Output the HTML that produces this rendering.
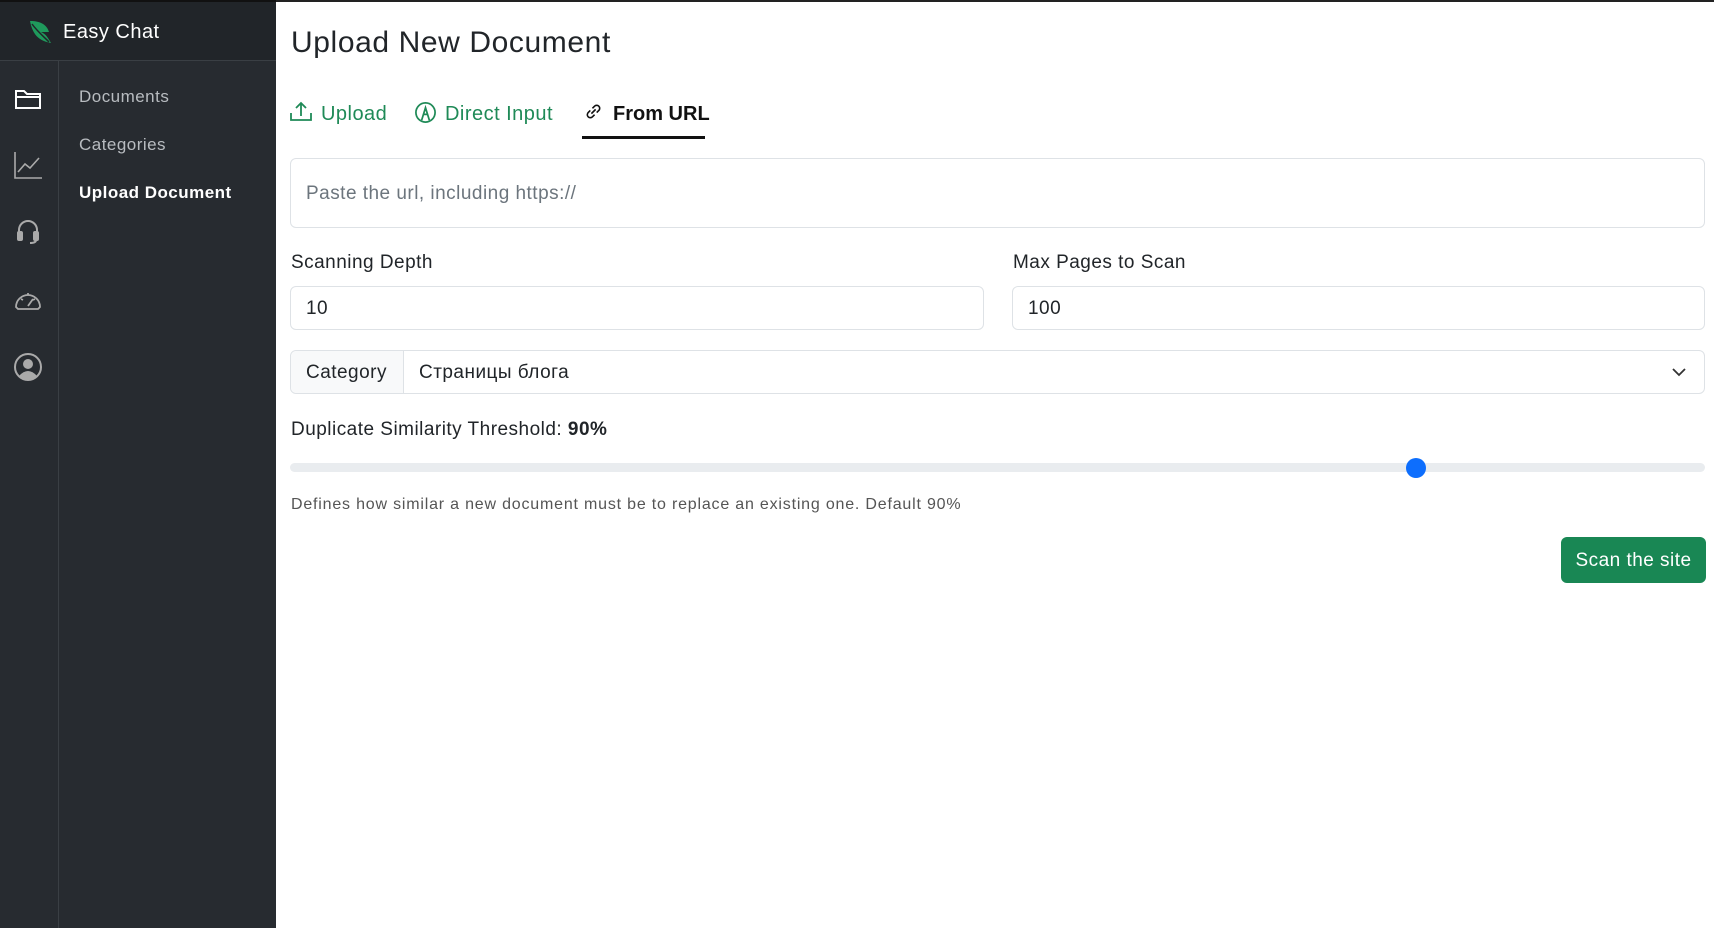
<!DOCTYPE html>
<html><head><meta charset="utf-8"><style>
*{box-sizing:border-box;margin:0;padding:0}
body{width:1714px;height:928px;overflow:hidden;font-family:"Liberation Sans","Noto Sans CJK SC",sans-serif;background:#fff;color:#212529;position:relative;letter-spacing:0.03em}
.abs{position:absolute}
#side{left:0;top:0;width:276px;height:928px;background:#272b30}
#head{left:0;top:0;width:276px;height:61px;background:#212529;border-bottom:1px solid #3a3f44;border-top:2px solid #111}
#iconcol{left:0;top:61px;width:59px;height:867px;border-right:1px solid #3a3f44}
.nav{left:79px;font-size:17px;color:#b8bcc0}
.ic{left:13px;width:30px;height:30px}
.lbl{font-size:19px;color:#212529}
.inp{border:1px solid #dee2e6;border-radius:6px;background:#fff;font-size:19px;padding-left:15px;display:flex;align-items:center;padding-top:2px}
</style></head><body>
<div class="abs" style="left:276px;top:0;width:1438px;height:2px;background:#222"></div>
<div id="side" class="abs"></div>
<div id="head" class="abs">
<svg class="abs" style="left:27px;top:17px" width="26" height="26" viewBox="0 0 26 26"><path d="M3 2 C14 2 20 6 22 13 L14 13 C19 15 21 19 24 24 C14 22 6 18 3 2Z" fill="#1f9a5c"/><path d="M5 5 C10 12 16 17 22 23" stroke="#212529" stroke-width="1.5" fill="none"/></svg>
<div class="abs" style="left:63px;top:19px;font-size:20px;color:#fff">Easy Chat</div>
</div>
<div id="iconcol" class="abs"></div>
<svg class="abs ic" style="top:84px" viewBox="0 0 30 30" fill="none" stroke="#fff" stroke-width="2"><path d="M3 7 h8 l3 3 h13 v14 h-24z M3 13 h24"/></svg>
<svg class="abs ic" style="top:150px" viewBox="0 0 30 30" fill="none" stroke="#aaa" stroke-width="1.6"><path d="M2 2 v26 h27 M5 22 l7 -8 l5 4 l9 -10"/></svg>
<svg class="abs ic" style="top:217px" viewBox="0 0 30 30" fill="none" stroke="#aaa" stroke-width="2"><path d="M6 18 v-5 a9 9 0 0 1 18 0 v5"/><rect x="5" y="15" width="4" height="8" rx="1" fill="#aaa"/><rect x="21" y="15" width="4" height="8" rx="1" fill="#aaa"/><path d="M23 23 q0 3 -6 3"/></svg>
<svg class="abs ic" style="top:285px" viewBox="0 0 30 30" fill="none" stroke="#aaa" stroke-width="1.8"><path d="M3 22 a12 12 0 1 1 24 0 l-2 2 h-20z M15 21 l5 -7 M8 14 l2 1 M22 14 l-2 1 M15 8 v2"/></svg>
<svg class="abs ic" style="top:352px" viewBox="0 0 30 30"><circle cx="15" cy="15" r="13" fill="none" stroke="#aaa" stroke-width="2"/><circle cx="15" cy="12" r="5" fill="#aaa"/><path d="M6 24 q9 -10 18 0 q-9 7 -18 0z" fill="#aaa"/></svg>
<div class="abs nav" style="top:87px">Documents</div>
<div class="abs nav" style="top:135px">Categories</div>
<div class="abs nav" style="top:183px;color:#fff;font-weight:bold">Upload Document</div>

<div class="abs" style="left:291px;top:26px;font-size:30px;color:#212529;letter-spacing:0.02em">Upload New Document</div>
<svg class="abs" style="left:289px;top:101px" width="24" height="22" viewBox="0 0 24 22" fill="none" stroke="#1f8a57" stroke-width="1.8"><path d="M2 12 v7 h20 v-7 M12 15 v-13 M7 7 l5 -5 l5 5"/></svg>
<div class="abs" style="left:321px;top:103px;font-size:20px;color:#1f8a57">Upload</div>
<svg class="abs" style="left:414px;top:101px" width="23" height="23" viewBox="0 0 24 24" fill="none" stroke="#1f8a57" stroke-width="1.8"><circle cx="12" cy="12" r="10"/><path d="M8 20 l4 -13 l4 13 M10 14 h4"/></svg>
<div class="abs" style="left:445px;top:103px;font-size:20px;color:#1f8a57">Direct Input</div>
<svg class="abs" style="left:585px;top:103px" width="17" height="17" viewBox="0 0 16 16" fill="none" stroke="#111" stroke-width="1.5"><path d="M7 5 l2 -2 a2.5 2.5 0 0 1 4 4 l-2 2 M9 11 l-2 2 a2.5 2.5 0 0 1 -4 -4 l2 -2 M6 10 l4 -4"/></svg>
<div class="abs" style="left:613px;top:103px;font-size:20px;color:#111;font-weight:bold;letter-spacing:0">From URL</div>
<div class="abs" style="left:582px;top:136px;width:123px;height:3px;background:#111"></div>

<div class="abs inp" style="left:290px;top:158px;width:1415px;height:70px;color:#6c757d">Paste the url, including https://</div>
<div class="abs lbl" style="left:291px;top:252px">Scanning Depth</div>
<div class="abs lbl" style="left:1013px;top:252px">Max Pages to Scan</div>
<div class="abs inp" style="left:290px;top:286px;width:694px;height:44px">10</div>
<div class="abs inp" style="left:1012px;top:286px;width:693px;height:44px">100</div>
<div class="abs inp" style="left:290px;top:350px;width:1415px;height:44px;padding-left:0;padding-top:0">
<div style="width:113px;height:42px;background:#f8f9fa;border-right:1px solid #dee2e6;border-radius:6px 0 0 6px;display:flex;align-items:center;padding-left:15px;padding-top:2px">Category</div>
<div style="padding-left:15px;padding-top:2px">Страницы блога</div>
<svg class="abs" style="right:18px;top:16px" width="14" height="10" viewBox="0 0 14 10" fill="none" stroke="#333" stroke-width="1.8"><path d="M1 2 l6 6 l6 -6"/></svg>
</div>
<div class="abs lbl" style="left:291px;top:419px">Duplicate Similarity Threshold: <b>90%</b></div>
<div class="abs" style="left:290px;top:463px;width:1415px;height:9px;background:#e9ecef;border-radius:5px"></div>
<div class="abs" style="left:1406px;top:458px;width:20px;height:20px;background:#0d6efd;border-radius:50%"></div>
<div class="abs" style="left:291px;top:496px;font-size:16px;color:#555;letter-spacing:0.05em">Defines how similar a new document must be to replace an existing one. Default 90%</div>
<div class="abs" style="left:1561px;top:537px;width:145px;height:46px;background:#198754;border-radius:6px;color:#fff;font-size:19px;display:flex;align-items:center;justify-content:center;padding-top:2px">Scan the site</div>
</body></html>
